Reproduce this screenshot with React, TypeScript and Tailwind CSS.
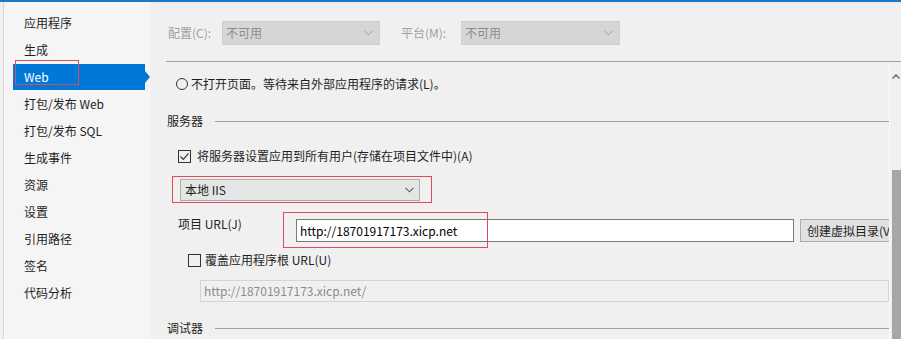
import React from "react";

const font = { fontFamily: '"Noto Sans CJK SC", "Liberation Sans", sans-serif' };

function Chevron({ color = "#606060" }: { color?: string }) {
  return (
    <svg width="9" height="6" viewBox="0 0 9 6" className="shrink-0">
      <path d="M0.5 0.8 L4.5 4.8 L8.5 0.8" fill="none" stroke={color} strokeWidth="1.1" />
    </svg>
  );
}

const items = ["应用程序", "生成", "Web", "打包/发布 Web", "打包/发布 SQL", "生成事件", "资源", "设置", "引用路径", "签名", "代码分析"];

export default function App() {
  return (
    <div className="relative flex h-[339px] w-[901px] flex-col overflow-hidden bg-[#f0f0f0] text-[12px] leading-[16px] text-[#1e1e1e]" style={font}>
      <div className="h-[2px] w-full shrink-0 bg-[#1979ca]" />
      <div className="flex min-h-0 flex-1">
        {/* Sidebar */}
        <div className="relative ml-[3px] flex w-[147px] shrink-0 flex-col border-l border-l-[#d6d6d6] bg-[#f5f5f5] pt-[7px]">
          {items.map((t) => {
            const sel = t === "Web";
            return (
              <div key={t} className="relative flex h-[27px] items-center">
                {sel ? (
                  <div className="relative ml-[9px] flex h-[26px] w-[132px] items-center bg-[#0078d7] pl-[11px] text-white">
                    {t}
                    <div className="absolute right-[-5px] top-[7px] h-0 w-0 border-y-[6px] border-l-[5px] border-y-transparent border-l-[#0078d7]" />
                  </div>
                ) : (
                  <span className="pl-[20px]">{t}</span>
                )}
              </div>
            );
          })}
        </div>

        {/* Main */}
        <div className="flex min-w-0 flex-1 flex-col">
          <div className="h-[1px] bg-[#fbe6d4]" />
          <div className="h-[3px] bg-[#eaf1fa]" />
          {/* config row */}
          <div className="mt-[15px] flex h-[24px] items-center pl-[18px] text-[#a0a0a0]">
            <span className="w-[54px]">配置(C):</span>
            <div className="flex h-[24px] w-[158px] items-center justify-between border border-[#cfcfcf] bg-[#d6d6d6] pl-[3px] pr-[6px] text-[#8c8c8c]">
              <span>不可用</span>
              <Chevron color="#b0b0b0" />
            </div>
            <span className="ml-[21px] w-[60px]">平台(M):</span>
            <div className="flex h-[24px] w-[159px] items-center justify-between border border-[#cfcfcf] bg-[#d6d6d6] pl-[3px] pr-[6px] text-[#8c8c8c]">
              <span>不可用</span>
              <Chevron color="#b0b0b0" />
            </div>
          </div>
          <div className="ml-[16px] mt-[16px] h-[1px] bg-[#a0a0a0]" />

          {/* scroll region */}
          <div className="flex min-h-0 flex-1">
            <div className="flex min-w-0 flex-1 flex-col overflow-hidden">
              <div className="mt-[13px] flex h-[18px] items-center pl-[26px]">
                <div className="h-[12px] w-[12px] rounded-full border border-[#333]" />
                <span className="ml-[3px]">不打开页面。等待来自外部应用程序的请求(L)。</span>
              </div>

              <div className="mt-[19px] flex h-[18px] items-center pl-[17px]">
                <span>服务器</span>
                <div className="ml-[12px] h-[1px] flex-1 bg-[#a0a0a0]" />
              </div>

              <div className="mt-[17px] flex h-[18px] items-center pl-[28px]">
                <div className="flex h-[13px] w-[13px] items-center justify-center border border-[#333] bg-[#f0f0f0]">
                  <svg width="11" height="11" viewBox="0 0 11 11">
                    <path d="M1.5 5.5 L4.3 8.3 L9.5 2.3" fill="none" stroke="#333" strokeWidth="1.2" />
                  </svg>
                </div>
                <span className="ml-[6px]">将服务器设置应用到所有用户(存储在项目文件中)(A)</span>
              </div>

              <div className="ml-[30px] mt-[14px] flex h-[22px] w-[240px] items-center justify-between border border-[#adadad] bg-[#e5e5e5] pl-[4px] pr-[5px]">
                <span>本地 IIS</span>
                <Chevron />
              </div>

              <div className="mt-[15px] flex h-[27px] items-start pl-[28px]">
                <span className="w-[118px] shrink-0">项目 URL(J)</span>
                <div className="mt-[3px] flex h-[23px] w-[498px] shrink-0 items-center border border-[#7a7a7a] bg-white pl-[3px] text-black">
                  http://18701917173.xicp.net
                </div>
                <div className="ml-[6px] mt-[3px] flex h-[23px] w-[100px] shrink-0 items-center overflow-hidden whitespace-nowrap border border-[#adadad] bg-[#e1e1e1] pl-[6px]">
                  创建虚拟目录(V)
                </div>
              </div>

              <div className="mt-[8px] flex h-[18px] items-center pl-[38px]">
                <div className="h-[13px] w-[13px] border border-[#333] bg-[#f0f0f0]" />
                <span className="ml-[4px]">覆盖应用程序根 URL(U)</span>
              </div>

              <div className="ml-[50px] mt-[11px] flex h-[22px] items-center border border-[#d4d4d4] bg-[#f0f0f0] pl-[3px] text-[#8c8c8c]">
                http://18701917173.xicp.net/
              </div>

              <div className="mt-[17px] flex h-[18px] items-center pl-[17px]">
                <span>调试器</span>
                <div className="ml-[12px] h-[1px] flex-1 bg-[#a0a0a0]" />
              </div>
            </div>

            {/* scrollbar */}
            <div className="flex w-[12px] shrink-0 flex-col border-l border-l-[#fafafa] bg-[#f0f0f0] pt-[8px]">
              <div className="flex h-[12px] items-center justify-center">
                <svg width="8" height="5" viewBox="0 0 8 5">
                  <path d="M0.5 4.5 L4 1 L7.5 4.5" fill="none" stroke="#606060" strokeWidth="1.3" />
                </svg>
              </div>
              <div className="ml-[2px] mt-[88px] flex-1 bg-[#a6a6a6]" />
            </div>
          </div>
        </div>
      </div>

      {/* annotation overlays */}
      <div className="pointer-events-none absolute left-[15px] top-[60px] h-[25px] w-[64px] border border-[#e04a5a]" />
      <div className="pointer-events-none absolute left-[172px] top-[176px] h-[27px] w-[260px] border border-[#e04a5a]" />
      <div className="pointer-events-none absolute left-[283px] top-[212px] h-[36px] w-[205px] border border-[#e04a5a]" />
    </div>
  );
}
